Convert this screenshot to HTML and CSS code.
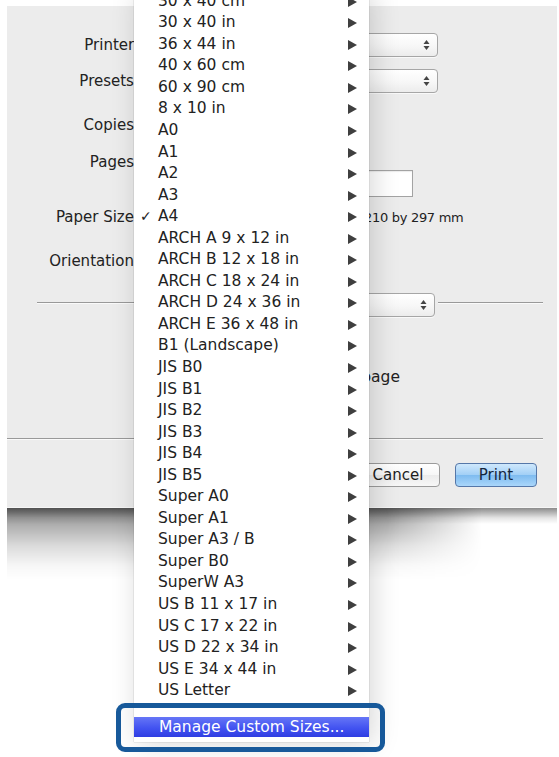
FILE: index.html
```html
<!DOCTYPE html>
<html lang="en">
<head>
    <meta charset="UTF-8">
    <meta name="viewport" content="width=device-width, initial-scale=1.0">
    <title>Print</title>
    <link rel="stylesheet" href="styles.css">
</head>
<body>
<div class="screen">

    <!-- Print sheet (most of it sits under the open menu) -->
    <div class="sheet">
        <div class="row row-printer">
            <span class="label">Printer:</span>
            <div class="popup popup-wide"><svg class="stepper" width="7" height="12" viewBox="0 0 7 12"><polygon points="0.5,5 3.5,1 6.5,5"/><polygon points="0.5,7 3.5,11 6.5,7"/></svg></div>
        </div>
        <div class="row row-presets">
            <span class="label">Presets:</span>
            <div class="popup popup-wide"><svg class="stepper" width="7" height="12" viewBox="0 0 7 12"><polygon points="0.5,5 3.5,1 6.5,5"/><polygon points="0.5,7 3.5,11 6.5,7"/></svg></div>
        </div>
        <div class="row row-copies">
            <span class="label">Copies:</span>
            <div class="controls">
                <div class="field field-copies"></div>
            </div>
        </div>
        <div class="row row-pages">
            <span class="label">Pages:</span>
            <div class="controls"><span class="radio"></span></div>
        </div>
        <div class="row row-range">
            <span></span>
            <div class="controls range">
                <span class="radio"></span>
                <div class="field field-from"></div>
                <div class="field field-to"></div>
            </div>
        </div>
        <div class="row row-paper">
            <span class="label">Paper Size:</span>
            <div class="controls paper">
                <div class="popup popup-paper"></div>
                <span class="paper-dim">210 by 297 mm</span>
            </div>
        </div>
        <div class="row row-orient">
            <span class="label">Orientation:</span>
            <div class="controls"><span class="radio"></span></div>
        </div>

        <div class="section-head">
            <div class="rule"></div>
            <div class="popup popup-section"><svg class="stepper" width="7" height="12" viewBox="0 0 7 12"><polygon points="0.5,5 3.5,1 6.5,5"/><polygon points="0.5,7 3.5,11 6.5,7"/></svg></div>
            <div class="rule"></div>
        </div>

        <div class="row row-page">
            <span></span>
            <div class="controls page-text">page</div>
        </div>

        <div class="rule rule-bottom"></div>

        <div class="buttons">
            <button class="btn">Cancel</button>
            <button class="btn btn-default">Print</button>
        </div>
    </div>

    <div class="sheet-shadow">
        <div class="sheet-shadow-fade"></div>
    </div>

    <!-- Paper size menu, open over the sheet -->
    <ul class="menu">
        <li class="sub">30 x 40 cm</li>
        <li class="sub">30 x 40 in</li>
        <li class="sub">36 x 44 in</li>
        <li class="sub">40 x 60 cm</li>
        <li class="sub">60 x 90 cm</li>
        <li class="sub">8 x 10 in</li>
        <li class="sub">A0</li>
        <li class="sub">A1</li>
        <li class="sub">A2</li>
        <li class="sub">A3</li>
        <li class="sub checked">A4</li>
        <li class="sub">ARCH A 9 x 12 in</li>
        <li class="sub">ARCH B 12 x 18 in</li>
        <li class="sub">ARCH C 18 x 24 in</li>
        <li class="sub">ARCH D 24 x 36 in</li>
        <li class="sub">ARCH E 36 x 48 in</li>
        <li class="sub">B1 (Landscape)</li>
        <li class="sub">JIS B0</li>
        <li class="sub">JIS B1</li>
        <li class="sub">JIS B2</li>
        <li class="sub">JIS B3</li>
        <li class="sub">JIS B4</li>
        <li class="sub">JIS B5</li>
        <li class="sub">Super A0</li>
        <li class="sub">Super A1</li>
        <li class="sub">Super A3 / B</li>
        <li class="sub">Super B0</li>
        <li class="sub">SuperW A3</li>
        <li class="sub">US B 11 x 17 in</li>
        <li class="sub">US C 17 x 22 in</li>
        <li class="sub">US D 22 x 34 in</li>
        <li class="sub">US E 34 x 44 in</li>
        <li class="sub">US Letter</li>
        <li class="separator"></li>
        <li class="selected">Manage Custom Sizes...</li>
    </ul>

    <div class="callout"></div>
</div>
</body>
</html>
```

FILE: styles.css
```css
body {
    margin: 0;
    background-color: #fff;
    font-family: 'DejaVu Sans', Verdana, sans-serif;
    font-size: 15.5px;
    color: #222;
    overflow: hidden;
}

.screen {
    position: relative;
    width: 559px;
    height: 757px;
    overflow: hidden;
}

/* sheet */

.sheet {
    box-sizing: border-box;
    width: 550px;
    height: 502px;
    margin: 6px 0 0 7px;
    padding-top: 27px;
    background-color: #ececec;
    border-bottom: 1px solid #f6f6f6;
}

.row {
    display: grid;
    grid-template-columns: 132px auto;
    column-gap: 6px;
    align-items: center;
}

.label {
    text-align: right;
    font-size: 15px;
}

.row-printer { height: 24px; }
.row-presets { height: 24px; margin-top: 12px; }
.row-copies  { height: 24px; margin-top: 20px; }
.row-pages   { height: 21px; margin-top: 14px; }
.row-range   { height: 27px; margin-top: -2px; }
.row-paper   { height: 22px; margin-top: 8px; }
.row-orient  { height: 28px; margin-top: 20px; }
.row-page    { height: 22px; margin-top: 49px; }

.controls {
    display: flex;
    align-items: center;
    gap: 8px;
}

.popup {
    box-sizing: border-box;
    height: 24px;
    display: flex;
    align-items: center;
    justify-content: flex-end;
    padding: 0 7px 0 9px;
    background: linear-gradient(#ffffff, #f7f7f7 55%, #ececec);
    border: 1px solid #a6a6a6;
    border-radius: 4px;
    box-shadow: 0 1px 0 rgba(255,255,255,0.7);
}

.popup-wide { width: 293px; }
.popup-paper { width: 209px; }
.popup-section { width: 290px; }

.stepper {
    fill: #444;
}

.radio {
    width: 14px;
    height: 14px;
    border: 1px solid #999;
    border-radius: 50%;
    background-color: #fff;
}

.field {
    box-sizing: border-box;
    height: 27px;
    background-color: #fff;
    border: 1px solid #a3a3a3;
    box-shadow: inset 0 1px 1px rgba(0,0,0,0.08);
}

.field-copies { width: 42px; height: 24px; }
.field-from { width: 44px; }

.range {
    width: 268px;
}

.field-to {
    width: 48px;
    margin-left: auto;
}

.paper {
    gap: 10px;
}

.paper-dim {
    font-size: 13px;
    letter-spacing: -0.3px;
}

.page-text {
    width: 255px;
    justify-content: flex-end;
}

.section-head {
    display: flex;
    align-items: center;
    gap: 3px;
    height: 24px;
    margin-top: 18px;
    padding: 0 14px 0 30px;
}

.section-head .rule {
    flex: 1;
    margin-top: -4px;
}

.rule {
    height: 1px;
    background-color: #999;
    border-bottom: 1px solid #fafafa;
}

.rule-bottom {
    margin: 50px 14px 0 0;
}

.buttons {
    display: flex;
    justify-content: flex-end;
    gap: 15px;
    margin-top: 23px;
    padding-right: 20px;
}

.btn {
    width: 84px;
    height: 24px;
    padding: 0;
    font-family: inherit;
    font-size: 15px;
    color: #1d1d1d;
    border: 1px solid #9b9b9b;
    border-radius: 4px;
    background: linear-gradient(#ffffff, #f6f6f6 50%, #ebebeb 51%, #f7f7f7);
}

.btn-default {
    width: 82px;
    color: #14263c;
    border-color: #5577a8;
    background: linear-gradient(#cfe8fc, #a3d0f6 48%, #7fbcf0 52%, #aad6fa);
}

/* shadow under the sheet */

.sheet-shadow {
    width: 550px;
    height: 75px;
    margin-left: 7px;
    background: linear-gradient(rgba(0,0,0,0.45), rgba(0,0,0,0.1) 10px, rgba(0,0,0,0) 16px);
}

.sheet-shadow-fade {
    width: 475px;
    height: 75px;
    background: linear-gradient(rgba(0,0,0,0.42), rgba(0,0,0,0.34) 14px, rgba(0,0,0,0.14) 38px, rgba(0,0,0,0.03) 58px, rgba(0,0,0,0) 72px);
    -webkit-mask-image: linear-gradient(to right, #000 80%, transparent);
    mask-image: linear-gradient(to right, #000 80%, transparent);
}

/* menu */

.menu {
    position: absolute;
    left: 134px;
    top: -9.3px;
    width: 235px;
    margin: 0;
    padding: 0 0 5px 0;
    list-style: none;
    background-color: #fff;
    box-shadow: 0 0 1px rgba(0,0,0,0.35), 4px 2px 26px rgba(0,0,0,0.16);
}

.menu li {
    position: relative;
    height: 21.55px;
    line-height: 21.55px;
    padding-left: 24px;
    white-space: nowrap;
}

.menu li.sub::after {
    content: "";
    position: absolute;
    right: 12px;
    top: 6px;
    border-left: 9px solid #3f3f3f;
    border-top: 5px solid transparent;
    border-bottom: 5px solid transparent;
}

.menu li.checked::before {
    content: "\2713";
    position: absolute;
    left: 6px;
    font-size: 14px;
}

.menu li.separator {
    height: 15px;
}

.menu li.selected {
    height: 20px;
    line-height: 20px;
    padding-left: 25px;
    color: #fff;
    background: linear-gradient(#6676f6, #4253f1 55%, #2f3de2);
}

.callout {
    position: absolute;
    left: 116px;
    top: 703px;
    box-sizing: border-box;
    width: 269px;
    height: 49px;
    border: 5px solid #17599a;
    border-radius: 9px;
}
```
